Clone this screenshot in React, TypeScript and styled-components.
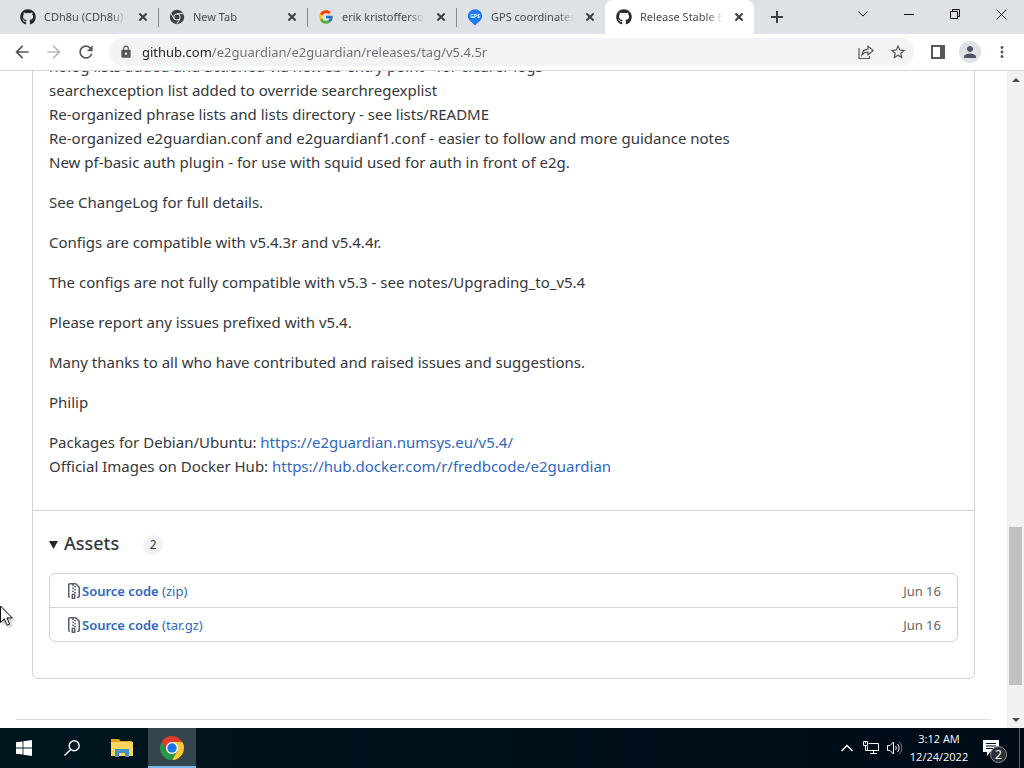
import React from 'react';
import styled, { createGlobalStyle } from 'styled-components';
import { MdArrowBack, MdArrowForward, MdRefresh, MdLock, MdStarBorder, MdMoreVert, MdPerson } from 'react-icons/md';
import { FcGoogle } from 'react-icons/fc';
import { FaGithub } from 'react-icons/fa';

const GlobalStyle = createGlobalStyle`
  * { box-sizing: border-box; }
  body { margin: 0; font-family: "Noto Sans", "Open Sans", sans-serif; color: #33383d; background: #fff; }
  button { border: 0; padding: 0; background: none; font: inherit; color: inherit; }
  svg { display: block; flex: none; }
`;

const Screen = styled.div`
  height: 100vh;
  display: flex;
  flex-direction: column;
  overflow: hidden;
`;

const TabStrip = styled.header`
  flex: none;
  height: 34px;
  display: flex;
  background: #dee1e6;
  padding-left: 9px;
`;

const TabList = styled.div`
  display: flex;
`;

const Tab = styled.div<{ $active?: boolean; $divider?: boolean }>`
  position: relative;
  width: 149px;
  height: 34px;
  padding: 0 7px 0 11px;
  display: flex;
  align-items: center;
  gap: 8px;
  border-radius: 8px 8px 0 0;
  background: ${p => (p.$active ? '#fff' : 'transparent')};
  &::after {
    content: '';
    display: ${p => (p.$divider ? 'block' : 'none')};
    position: absolute;
    right: -1px;
    top: 8px;
    width: 1px;
    height: 19px;
    background: #85888d;
  }
`;

const TabTitle = styled.button`
  width: 83px;
  overflow: hidden;
  white-space: nowrap;
  text-align: left;
  font-size: 11px;
  line-height: 16px;
  color: #45494d;
  mask-image: linear-gradient(to right, #000 80%, transparent);
`;

const TabClose = styled.button`
  width: 16px;
  height: 16px;
  display: grid;
  place-items: center;
  color: #3c4043;
`;

const NewTab = styled.button`
  width: 28px;
  margin-left: 9px;
  display: grid;
  place-items: center;
  color: #3c4043;
`;

const WindowButtons = styled.div`
  margin-left: auto;
  display: flex;
  height: 28px;
`;

const WindowButton = styled.button`
  width: 46px;
  display: grid;
  place-items: center;
  color: #111;
`;

const Toolbar = styled.nav`
  flex: none;
  height: 37px;
  padding: 0 6px;
  display: flex;
  align-items: center;
  background: #fff;
  border-bottom: 1px solid #d5d7da;
`;

const ToolButton = styled.button<{ $dim?: boolean }>`
  width: 32px;
  height: 28px;
  display: grid;
  place-items: center;
  color: ${p => (p.$dim ? '#babcbe' : '#54585d')};
`;

const AddressBar = styled.div`
  flex: 1;
  height: 28px;
  margin: 0 8px 0 7px;
  padding-left: 10px;
  display: flex;
  align-items: center;
  border-radius: 14px;
  background: #f1f3f4;
  color: #54585d;
`;

const AddressInput = styled.input`
  flex: 1;
  min-width: 0;
  border: 0;
  outline: 0;
  margin-left: 9px;
  padding: 0;
  height: 24px;
  font: 13px/24px "Noto Sans", "Open Sans", sans-serif;
  background: linear-gradient(to right, #202124 70px, #6a6e73 70px);
  background-clip: text;
  -webkit-text-fill-color: transparent;
`;

const Avatar = styled.span`
  width: 22px;
  height: 22px;
  border-radius: 50%;
  display: grid;
  place-items: center;
  background: #dee1e6;
  color: #4d5564;
`;

const Viewport = styled.div`
  flex: 1;
  min-height: 0;
  display: flex;
`;

const Page = styled.main`
  flex: 1;
  min-width: 0;
  display: flex;
  flex-direction: column;
  justify-content: flex-end;
  overflow: hidden;
  padding: 0 16px;
`;

const ReleaseCard = styled.article`
  flex: none;
  margin: 0 16px 40px;
  border: 1px solid #d2d3d5;
  border-radius: 6px;
`;

const Notes = styled.section`
  padding: 0 16px 32px;
  font-size: 15px;
  line-height: 24px;
  p { margin: 0 0 16px; }
  p:last-child { margin: 0; }
`;

const Link = styled.a`
  color: #2f68be;
  text-decoration: none;
`;

const Assets = styled.details`
  border-top: 1px solid #d2d3d5;
  padding: 16px 16px 36px;
`;

const AssetsSummary = styled.summary`
  display: flex;
  align-items: center;
  height: 32px;
  margin-bottom: 14px;
  list-style: none;
  > svg { margin-top: 4px; }
`;

const AssetsTitle = styled.span`
  margin: 0 24px 0 6px;
  font-size: 18px;
  line-height: 30px;
  font-weight: 500;
`;

const Counter = styled.span`
  min-width: 20px;
  margin-top: 4px;
  border-radius: 10px;
  text-align: center;
  font-size: 12px;
  line-height: 20px;
  background: #f1f2f3;
`;

const AssetList = styled.ul`
  margin: 0;
  padding: 0;
  list-style: none;
  border: 1px solid #d2d3d5;
  border-radius: 6px;
`;

const AssetRow = styled.li`
  display: flex;
  align-items: center;
  height: 33px;
  padding: 0 16px;
  font-size: 13px;
  line-height: 20px;
  & + & { height: 34px; border-top: 1px solid #d2d3d5; }
  svg { color: #57606a; }
  strong { font-weight: 600; }
`;

const AssetDate = styled.time`
  margin-left: auto;
  color: #5f666d;
`;

const PageFooter = styled.footer`
  flex: none;
  height: 9px;
  border-top: 1px solid #d8dadc;
`;

const Scrollbar = styled.div`
  flex: none;
  width: 17px;
  display: flex;
  flex-direction: column;
  align-items: center;
  background: #f1f1f1;
`;

const ScrollArrow = styled.button`
  flex: none;
  width: 17px;
  height: 17px;
  display: grid;
  place-items: center;
  color: #505050;
`;

const ScrollTrack = styled.div`
  flex: 1;
  display: flex;
  flex-direction: column;
  justify-content: flex-end;
  padding-bottom: 26px;
`;

const ScrollThumb = styled.div`
  width: 13px;
  height: 26.5%;
  background: #c1c1c1;
`;

const Taskbar = styled.footer`
  flex: none;
  height: 40px;
  display: flex;
  background: linear-gradient(to right, #00161f, #000b18);
  color: #fff;
`;

const TaskApps = styled.div`
  display: flex;
  gap: 2px;
  padding-left: 2px;
`;

const TaskButton = styled.button<{ $active?: boolean }>`
  width: 48px;
  height: 40px;
  display: grid;
  place-items: center;
  background: ${p => (p.$active ? '#35454d' : 'transparent')};
  box-shadow: ${p => (p.$active ? 'inset 0 -2px 0 #76b9ed' : 'none')};
`;

const Tray = styled.div`
  margin-left: auto;
  display: flex;
`;

const TrayButton = styled.button`
  width: 24px;
  display: grid;
  place-items: center;
`;

const Clock = styled.time`
  width: 64px;
  padding-top: 2px;
  text-align: center;
  white-space: nowrap;
  font-family: "Open Sans", "Noto Sans", sans-serif;
  font-size: 11px;
  line-height: 18px;
`;

const NoticeButton = styled.button`
  position: relative;
  width: 40px;
  margin-right: 8px;
  display: grid;
  place-items: center;
`;

const NoticeBadge = styled.span`
  position: absolute;
  left: 19px;
  top: 18px;
  width: 17px;
  height: 17px;
  border: 1px solid #8b9096;
  border-radius: 50%;
  background: #2b3138;
  font-size: 12px;
  line-height: 15px;
`;

const ShowDesktop = styled.button`
  width: 5px;
  border-left: 1px solid #5b646c;
`;

const Pointer = styled.svg`
  position: fixed;
  left: 0;
  top: 605px;
  filter: drop-shadow(2px 2px 1px rgba(0, 0, 0, 0.25));
`;

const CloseGlyph = ({ size = 8, stroke = 2 }: { size?: number; stroke?: number }) => (
  <svg width={size} height={size} viewBox="0 0 8 8">
    <path d="M.4.4 7.6 7.6M7.6.4.4 7.6" stroke="currentColor" strokeWidth={(stroke * 8) / size} />
  </svg>
);

const ChromeMono = () => (
  <svg width="16" height="16" viewBox="0 0 16 16">
    <circle cx="8" cy="8" r="7.2" fill="#3c4043" />
    <circle cx="8" cy="8" r="3.6" fill="#dee1e6" />
    <circle cx="8" cy="8" r="2.5" fill="#3c4043" />
    <path d="M8 4.6h7M5.1 9.8 1.6 3.8M10.9 9.8 7.6 15.4" stroke="#dee1e6" strokeWidth="1" />
  </svg>
);

const GpsPin = () => (
  <svg width="16" height="17" viewBox="0 0 16 17">
    <path d="M8 16.5C5.5 13.6.8 11 .8 7A7.2 6.8 0 0 1 15.2 7C15.2 11 10.500 13.600 8 16.500Z" fill="#1a7bf2" />
    <text x="8" y="8.500" textAnchor="middle" fontSize="5" fontWeight="700" fill="#fff">GPS</text>
  </svg>
);

const ChromeLogo = () => (
  <svg width="24" height="24" viewBox="0 0 24 24">
    <path d="M12 6H22.390A12 12 0 0 1 12 24L17.200 15Z" fill="#fcc934" />
    <path d="M6.800 15 1.610 6A12 12 0 0 1 22.390 6H12Z" fill="#e33b2e" />
    <path d="M6.800 15 1.610 6A12 12 0 0 0 12 24L17.200 15Z" fill="#279847" />
    <circle cx="12" cy="12" r="6" fill="#fff" />
    <circle cx="12" cy="12" r="4.700" fill="#1a73e8" />
  </svg>
);

const FileZip = () => (
  <svg width="16" height="16" viewBox="0 0 16 16" fill="currentColor">
    <path d="M3.500 1.750v11.500c0 .09.048.173.126.217a.75.75 0 0 1-.752 1.298A1.748 1.748 0 0 1 2 13.250V1.750C2 .784 2.784 0 3.750 0h5.586c.464 0 .909.185 1.237.513l2.914 2.914c.329.328.513.773.513 1.237v8.586A1.750 1.750 0 0 1 12.250 15h-.5a.75.75 0 0 1 0-1.500h.5a.25.25 0 0 0 .25-.25V4.664a.25.25 0 0 0-.073-.177L9.513 1.573a.25.25 0 0 0-.177-.073H7.250a.75.75 0 0 1 0 1.500h-.5a.75.75 0 0 1 0-1.500h-3a.25.25 0 0 0-.25.25Zm3.750 8.750h.5c.966 0 1.750.784 1.750 1.750v3a.75.75 0 0 1-.75.75h-2.500a.75.75 0 0 1-.75-.75v-3c0-.966.784-1.750 1.750-1.750ZM6 5.250a.75.75 0 0 1 .75-.75h.5a.75.75 0 0 1 0 1.500h-.5A.75.75 0 0 1 6 5.250Zm.75 2.250h.5a.75.75 0 0 1 0 1.500h-.5a.75.75 0 0 1 0-1.500Zm1.250-.75A.75.75 0 0 1 8.750 6h.5a.75.75 0 0 1 0 1.500h-.5A.75.75 0 0 1 8 6.750ZM8.750 3h.5a.75.75 0 0 1 0 1.500h-.5a.75.75 0 0 1 0-1.500ZM8 9.750A.75.75 0 0 1 8.750 9h.5a.75.75 0 0 1 0 1.500h-.5A.75.75 0 0 1 8 9.750Zm-1 2.500v2.250h1v-2.250a.25.25 0 0 0-.25-.25h-.5a.25.25 0 0 0-.25.25Z" />
  </svg>
);

const tabs = [
  { title: 'CDh8u (CDh8u)', icon: <FaGithub size={16} color="#24292f" />, divider: true },
  { title: 'New Tab', icon: <ChromeMono />, divider: true },
  { title: 'erik kristofferso', icon: <FcGoogle size={16} />, divider: true },
  { title: 'GPS coordinates', icon: <GpsPin /> },
  { title: 'Release Stable E', icon: <FaGithub size={16} color="#24292f" />, active: true },
];

const assets = ['zip', 'tar.gz'];

export default function App() {
  return (
    <Screen>
      <GlobalStyle />
      <TabStrip>
        <TabList>
          {tabs.map(t => (
            <Tab key={t.title} $active={t.active} $divider={t.divider}>
              {t.icon}
              <TabTitle>{t.title}</TabTitle>
              <TabClose aria-label="Close tab"><CloseGlyph /></TabClose>
            </Tab>
          ))}
        </TabList>
        <NewTab aria-label="New tab">
          <svg width="12" height="12" viewBox="0 0 12 12"><path d="M6 0v12M0 6h12" stroke="currentColor" strokeWidth="2" /></svg>
        </NewTab>
        <WindowButtons>
          <WindowButton aria-label="Search tabs">
            <svg width="10" height="6" viewBox="0 0 10 6"><path d="m.4.5 4.600 4.600L9.600.5" fill="none" stroke="currentColor" /></svg>
          </WindowButton>
          <WindowButton aria-label="Minimize">
            <svg width="10" height="10" viewBox="0 0 10 10"><path d="M0 5.500h10" stroke="currentColor" /></svg>
          </WindowButton>
          <WindowButton aria-label="Restore">
            <svg width="10" height="10" viewBox="0 0 10 10"><path d="M.5 2.500h7v7h-7zM2.500 2.500v-2h7v7h-2" fill="none" stroke="currentColor" /></svg>
          </WindowButton>
          <WindowButton aria-label="Close"><CloseGlyph size={11} stroke={1} /></WindowButton>
        </WindowButtons>
      </TabStrip>
      <Toolbar>
        <ToolButton aria-label="Back"><MdArrowBack size={20} /></ToolButton>
        <ToolButton aria-label="Forward" $dim><MdArrowForward size={20} /></ToolButton>
        <ToolButton aria-label="Reload"><MdRefresh size={20} /></ToolButton>
        <AddressBar>
          <MdLock size={14} />
          <AddressInput aria-label="Address" defaultValue="github.com/e2guardian/e2guardian/releases/tag/v5.4.5r" />
          <ToolButton aria-label="Share">
            <svg width="16" height="16" viewBox="0 0 16 16" fill="none" stroke="currentColor" strokeWidth="1.200">
              <path d="M1 4v10.500h10.500V12M4 11c.2-3.800 2.200-5.600 6-5.800V2.200L15.200 6.500 10 10.700V8C7.500 8 5.500 9 4 11Z" />
            </svg>
          </ToolButton>
          <ToolButton aria-label="Bookmark"><MdStarBorder size={18} /></ToolButton>
        </AddressBar>
        <ToolButton aria-label="Side panel">
          <svg width="14" height="14" viewBox="0 0 14 14"><path d="M1 1h12v12H1z" fill="none" stroke="currentColor" strokeWidth="2" /><path d="M9 1h4v12H9z" fill="currentColor" /></svg>
        </ToolButton>
        <ToolButton aria-label="Profile"><Avatar><MdPerson size={18} /></Avatar></ToolButton>
        <ToolButton aria-label="Menu"><MdMoreVert size={18} /></ToolButton>
      </Toolbar>
      <Viewport>
        <Page>
          <ReleaseCard>
            <Notes>
              <p>
                nolog lists added and actioned via new sb entry point - for clearer logs<br />
                searchexception list added to override searchregexplist<br />
                Re-organized phrase lists and lists directory - see lists/README<br />
                Re-organized e2guardian.conf and e2guardianf1.conf - easier to follow and more guidance notes<br />
                New pf-basic auth plugin - for use with squid used for auth in front of e2g.
              </p>
              <p>See ChangeLog for full details.</p>
              <p>Configs are compatible with v5.4.3r and v5.4.4r.</p>
              <p>The configs are not fully compatible with v5.3 - see notes/Upgrading_to_v5.4</p>
              <p>Please report any issues prefixed with v5.4.</p>
              <p>Many thanks to all who have contributed and raised issues and suggestions.</p>
              <p>Philip</p>
              <p>
                Packages for Debian/Ubuntu: <Link href="#debian">https://e2guardian.numsys.eu/v5.4/</Link><br />
                Official Images on Docker Hub: <Link href="#docker">https://hub.docker.com/r/fredbcode/e2guardian</Link>
              </p>
            </Notes>
            <Assets open>
              <AssetsSummary>
                <svg width="9" height="8" viewBox="0 0 9 8"><path d="M0 0h9L4.500 8Z" fill="#24292f" /></svg>
                <AssetsTitle>Assets</AssetsTitle>
                <Counter>2</Counter>
              </AssetsSummary>
              <AssetList>
                {assets.map(ext => (
                  <AssetRow key={ext}>
                    <FileZip />
                    <Link href={`#${ext}`}><strong>Source code</strong> ({ext})</Link>
                    <AssetDate>Jun 16</AssetDate>
                  </AssetRow>
                ))}
              </AssetList>
            </Assets>
          </ReleaseCard>
          <PageFooter />
        </Page>
        <Scrollbar>
          <ScrollArrow aria-label="Scroll up"><svg width="8" height="4" viewBox="0 0 8 4"><path d="M0 4h8L4 0Z" fill="currentColor" /></svg></ScrollArrow>
          <ScrollTrack><ScrollThumb /></ScrollTrack>
          <ScrollArrow aria-label="Scroll down"><svg width="8" height="4" viewBox="0 0 8 4"><path d="M0 0h8L4 4Z" fill="currentColor" /></svg></ScrollArrow>
        </Scrollbar>
      </Viewport>
      <Taskbar>
        <TaskButton aria-label="Start">
          <svg width="16" height="16" viewBox="0 0 16 16" fill="#fff"><path d="M0 2.300 6.600 1.400V7.600H0ZM7.400 1.300 16 0V7.600H7.400ZM0 8.400H6.600V14.600L0 13.700ZM7.400 8.400H16V16L7.400 14.700Z" /></svg>
        </TaskButton>
        <TaskButton aria-label="Search">
          <svg width="16" height="16" viewBox="0 0 16 16" fill="none" stroke="#fff" strokeWidth="1.400"><circle cx="10.200" cy="5.800" r="5" /><path d="M6.700 9.400.5 15.500" /></svg>
        </TaskButton>
        <TaskApps>
          <TaskButton aria-label="File Explorer">
            <svg width="22" height="18" viewBox="0 0 22 18">
              <path d="M0 0h8l1.500 2H21v5H0Z" fill="#e3a21a" />
              <path d="M0 3h22v14H0Z" fill="#fcd462" />
              <path d="M4 10h14v8h-4v-4H8v4H4Z" fill="#3f93c9" />
            </svg>
          </TaskButton>
          <TaskButton $active aria-label="Chrome"><ChromeLogo /></TaskButton>
        </TaskApps>
        <Tray>
          <TrayButton aria-label="Hidden icons"><svg width="12" height="8" viewBox="0 0 12 8"><path d="m.5 7 5.500-5.500L11.500 7" fill="none" stroke="#fff" strokeWidth="1.300" /></svg></TrayButton>
          <TrayButton aria-label="Network">
            <svg width="17" height="14" viewBox="0 0 17 14" fill="none" stroke="#fff"><path d="M5.500 2.500h10v7h-11v-4M10.500 9.500v3M7 12.500h7M2.500 5v4.500h3M.5 .5h4v4h-4zM2.500 .5v2" /></svg>
          </TrayButton>
          <TrayButton aria-label="Volume">
            <svg width="16" height="14" viewBox="0 0 16 14" fill="none" stroke="#fff"><path d="M.5 4.500h2.500L6.500 1v12L3 9.500H.5ZM8.500 5c1 1.200 1 2.800 0 4M10.500 3c2 2.300 2 5.700 0 8" /><path d="M12.500 1c3 3.400 3 8.600 0 12" stroke="#7b838a" /></svg>
          </TrayButton>
          <Clock>3:12 AM<br />12/24/2022</Clock>
          <NoticeButton aria-label="Notifications">
            <svg width="16" height="16" viewBox="0 0 16 16"><path d="M0 0h16v12H7l-3 4v-4H0Z" fill="#fff" /><path d="M3 3.500h10M3 6h10M3 8.500h7" stroke="#000b18" /></svg>
            <NoticeBadge>2</NoticeBadge>
          </NoticeButton>
          <ShowDesktop aria-label="Show desktop" />
        </Tray>
      </Taskbar>
      <Pointer width="14" height="22" viewBox="0 0 14 22">
        <path d="M.5 1v16.500l3.800-3.600 2.700 6.300 2.600-1.100-2.700-6.200h5.300Z" fill="#fff" stroke="#111" />
      </Pointer>
    </Screen>
  );
}
